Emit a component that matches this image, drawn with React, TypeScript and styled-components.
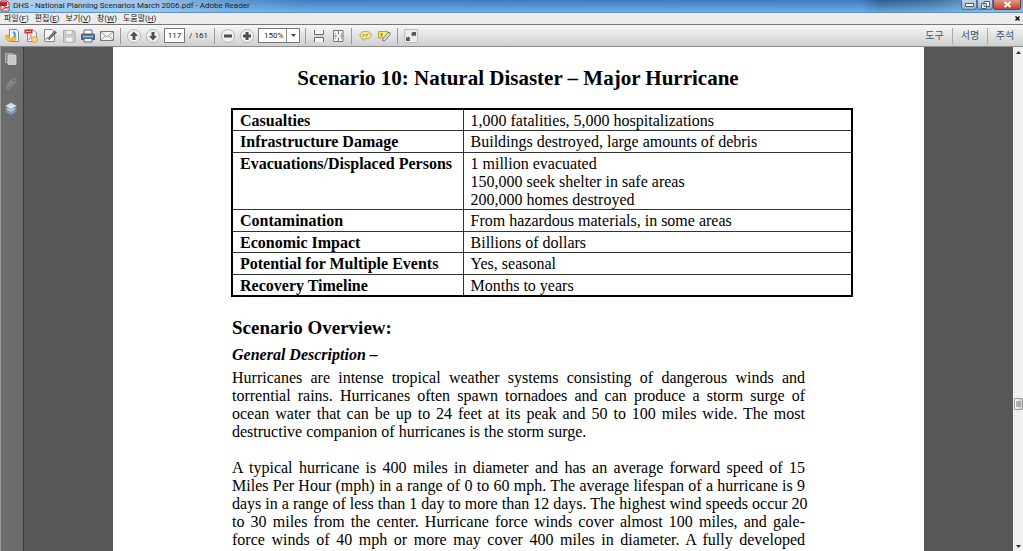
import React from "react";
import styled, { createGlobalStyle } from "styled-components";

const Global = createGlobalStyle`
  * { box-sizing: border-box; }
  body { margin: 0; overflow: hidden; background: #575757; }
  button, input, select { font: inherit; color: inherit; margin: 0; }
  button { border: 0; padding: 0; background: none; }
`;

const Window = styled.div`
  height: 100vh;
  display: flex;
  flex-direction: column;
  font: 8px/12px Roboto, "Noto Sans CJK KR", sans-serif;
  color: #222;
`;

const TitleBar = styled.header`
  flex: none;
  height: 13px;
  display: flex;
  align-items: flex-start;
  gap: 3px;
  background: linear-gradient(rgba(255, 255, 255, 0), rgba(140, 205, 255, 0.6)),
    linear-gradient(90deg, #b4cee8 0, #a3c4e4 14%, #5f97cf 22%, #3f7dbf 30%, #3c7cc0 84%, #2d5c92 86%, #3c6c9e 91%, #7ba5cc 97%);
  border-bottom: 1px solid #5f93c4;
  svg { flex: none; }
`;

const WindowTitle = styled.h1`
  margin: 0;
  flex: 1;
  font-size: 8px;
  line-height: 12px;
  font-weight: 400;
  white-space: nowrap;
`;

const WindowButtons = styled.div`
  display: flex;
  margin-right: 2px;
`;

const WindowButton = styled.button<{ $close?: boolean }>`
  width: ${(p) => (p.$close ? 28 : 16)}px;
  height: 10px;
  display: flex;
  align-items: center;
  justify-content: center;
  border: 1px solid ${(p) => (p.$close ? "#7c3a38" : "#54718f")};
  border-top: 0;
  border-radius: 0 0 3px 3px;
  background: ${(p) => (p.$close ? "linear-gradient(#dc9a8c, #c8402e)" : "linear-gradient(#c3d5e6, #93b2cf)")};
`;

const MenuBar = styled.nav`
  flex: none;
  height: 11px;
  display: flex;
  align-items: center;
  gap: 6px;
  padding: 0 3px 0 4px;
  background: #ececec;
`;

const MenuItem = styled.button`
  line-height: 11px;
  white-space: nowrap;
`;

const DocClose = styled(MenuItem)`
  margin-left: auto;
  display: flex;
`;

const Toolbar = styled.div`
  flex: none;
  height: 23px;
  display: flex;
  align-items: center;
  padding: 0 1px 0 4px;
  background: linear-gradient(#f7f7f7, #cfcfcf);
  border-top: 1px solid #777;
  border-bottom: 1px solid #8c8c8c;
`;

const ToolGroup = styled.div`
  display: flex;
  align-items: center;
  gap: 3px;
`;

const Separator = styled.span`
  width: 1px;
  height: 16px;
  margin: 0 5px;
  background: #999;
`;

const ToolButton = styled.button`
  display: flex;
  width: 16px;
  height: 16px;
`;

const PageField = styled.input`
  width: 21px;
  height: 15px;
  padding: 0;
  border: 1px solid #777;
  background: #fff;
  text-align: center;
`;

const PageTotal = styled.span`
  width: 21px;
  text-align: center;
  white-space: nowrap;
`;

const ZoomBox = styled.div`
  display: flex;
  align-items: center;
  width: 42px;
  height: 15px;
  border: 1px solid #777;
  background: #fff;
`;

const ZoomSelect = styled.select`
  appearance: none;
  flex: 1;
  min-width: 0;
  height: 13px;
  border: 0;
  border-right: 1px solid #888;
  padding: 0 0 0 5px;
  background: none;
`;

const PaneLinks = styled.div`
  display: flex;
  align-items: center;
  margin-left: auto;
`;

const PaneButton = styled.button`
  width: 35px;
  height: 16px;
  font-size: 10px;
  color: #3f5872;
  & + & { border-left: 1px solid #aaa; }
`;

const Workspace = styled.div`
  flex: 1;
  min-height: 0;
  display: flex;
`;

const SideRail = styled.aside`
  flex: none;
  width: 24px;
  display: flex;
  flex-direction: column;
  align-items: center;
  gap: 9px;
  padding: 4px 2px 0 0;
  background: #6c6c6c;
  border-left: 1px solid #999;
  border-right: 1px solid #3c3c3c;
`;

const Canvas = styled.main`
  flex: 1;
  min-width: 0;
  display: flex;
  justify-content: center;
  overflow: hidden;
  background: #575757;
`;

const Sheet = styled.article`
  width: 82%;
  flex: none;
  padding: 0 71px 0 118px;
  background: #fff;
  color: #000;
  font: 16px/18px "Liberation Serif", serif;
`;

const ScenarioTitle = styled.h2`
  margin: 19px 48px 18px 0;
  text-align: center;
  font-size: 21px;
  line-height: 24px;
  white-space: nowrap;
`;

const Facts = styled.table`
  width: 100%;
  border-collapse: collapse;
  border: 2px solid #000;
  th, td {
    padding: 2px 7px 0;
    border: 1px solid #333;
    text-align: left;
    vertical-align: top;
  }
  tr:nth-child(even) > * { padding-bottom: 1px; }
  th { width: 231px; white-space: nowrap; }
`;

const Section = styled.section`
  margin: 0 48px 0 1px;
`;

const SectionTitle = styled.h3`
  margin: 20px 0 6px;
  font-size: 19px;
  line-height: 22px;
`;

const SubTitle = styled.h4`
  margin: 0 0 4px;
  font-size: 16px;
  line-height: 20px;
  font-style: italic;
`;

const Paragraph = styled.p`
  margin: 0 0 18px;
`;

const Line = styled.span<{ $last?: boolean }>`
  display: block;
  white-space: nowrap;
  text-align: justify;
  text-align-last: ${(p) => (p.$last ? "left" : "justify")};
`;

const ScrollTrack = styled.div`
  flex: none;
  width: 10px;
  display: flex;
  flex-direction: column;
  align-items: center;
  background: #f1f1f1;
`;

const ScrollButton = styled.button`
  width: 10px;
  height: 10px;
  display: flex;
  align-items: center;
  justify-content: center;
`;

const ScrollSpace = styled.div<{ $grow: number }>`
  flex: ${(p) => p.$grow} 0 0;
`;

const ScrollThumb = styled.div`
  width: 9px;
  height: 12px;
  display: flex;
  border: 1px solid #999;
  border-radius: 1px;
  background: linear-gradient(90deg, #fafafa, #cfcfcf);
`;

const Arrow = ({ up }: { up?: boolean }) => (
  <svg width="5" height="3" viewBox="0 0 5 3">
    <path d={up ? "M0 3L2.500 0L5 3Z" : "M0 0L2.500 3L5 0Z"} fill="#333" />
  </svg>
);

const icons: Record<string, React.ReactNode> = {
  open: (
    <>
      <path d="M5.500 1.500h7l2 2v10h-9z" fill="#eef5fb" stroke="#6f8ea8" />
      <path d="M9 4c2.500 1 2.500 4 1 6" fill="none" stroke="#5b9cca" strokeWidth="2" />
      <path d="M2 7c-1.500 6 4 7.500 7.500 5.500v1.500l3-3.500-3.500-2.500v1.500c-2.500 1.500-4 .5-4-2z" fill="#f3c04a" stroke="#c2922c" strokeWidth=".6" />
    </>
  ),
  create: (
    <>
      <path d="M4.500 2h6l3 3v8.500h-9z" fill="#fafafa" stroke="#888" />
      <path d="M1.500 1.500h8v4h-8z" fill="#ce3031" />
      <path d="M3 3.500h5" stroke="#f3b9b6" />
      <path d="M5.500 11.500c3-3 3-5 2-5s1 4 3.500 3.500-3-.5-5.500 1.500" fill="none" stroke="#d86a6a" strokeWidth=".8" />
      <circle cx="11.500" cy="11.500" r="3" fill="#f5d968" stroke="#bd9c3c" strokeWidth=".7" />
    </>
  ),
  sign: (
    <>
      <path d="M2.500 1.500h7.500l2.500 2.500v9.500h-10z" fill="#f7f7f7" stroke="#888" />
      <path d="M4 11.500c1.500-4 2.500 1 4-.5" fill="none" stroke="#444" />
      <path d="M7 9l5.500-6L14.500 4.500l-6 6-2 .5z" fill="#777" stroke="#444" strokeWidth=".6" />
    </>
  ),
  save: (
    <>
      <path d="M2.500 2.500h10l1.500 1.500v10h-11.500z" fill="#cfcfcf" stroke="#a8a8a8" />
      <path d="M5 2.500h6v4H5zM4.500 9h7.500v5H4.500z" fill="#f1f1f1" stroke="#b2b2b2" strokeWidth=".7" />
    </>
  ),
  print: (
    <>
      <path d="M4 2h8v5H4z" fill="#fff" stroke="#607181" />
      <path d="M2.500 6h11q1 0 1 1v4.500h-13V7q0-1 1-1z" fill="#5f7a93" stroke="#3f5a72" />
      <path d="M3 8.500h10" stroke="#9cc3e0" />
      <path d="M4 10.500h8v3.500H4z" fill="#e8f4fc" stroke="#607181" />
    </>
  ),
  mail: (
    <>
      <path d="M1.500 3.500h13v9h-13z" fill="#f2f2f2" stroke="#7a7a7a" />
      <path d="M2 4l6 5 6-5M2 12l4-4M14 12l-4-4" fill="none" stroke="#a2a2a2" />
    </>
  ),
  fitWidth: (
    <>
      <path d="M3.500 2v4.500h9V2M3.500 14V9.500h9V14" fill="#f5f5f5" stroke="#6a6a6a" />
      <path d="M3 8h10" stroke="#bbb" strokeDasharray="1 1" />
    </>
  ),
  fitPage: (
    <>
      <path d="M3.500 2.500h9.500v11h-9.500z" fill="#f5f5f5" stroke="#777" />
      <path d="M8.500 3v3.500M8.500 9.500v3.500M4 8h3M10 8h3" fill="none" stroke="#777" />
      <path d="M5.500 5v1.500M11.500 9.500V11M5.500 9.500V11M11.500 5v1.500" stroke="#999" />
    </>
  ),
  comment: (
    <>
      <path d="M8.500 3.500C5 3.500 3 4.700 3 7c0 1.800 1.200 2.700 2.500 3.200L6 12.500l2.500-2c4 0 5.500-1.500 5.500-3.500 0-2.300-2-3.500-5.500-3.500z" fill="#f6f0a0" stroke="#b3a136" />
      <path d="M5.500 6.500h2M5.500 8h2M8.500 6.500h3M8.500 8h2" stroke="#a59a3a" />
    </>
  ),
  highlight: (
    <>
      <path d="M2.500 3.500h9v6.500h-9z" fill="#f5ec72" stroke="#b3a136" />
      <path d="M4.500 5h2v3.500h-2z" fill="#a8992f" />
      <path d="M7 10.500l5-6h2v2l-5 6-2.500.5z" fill="#dedede" stroke="#666" strokeWidth=".8" />
    </>
  ),
  expand: (
    <>
      <path d="M1.500 1.500h13v13h-13z" fill="#ededed" stroke="#bdbdbd" />
      <path d="M8.500 4H13v4.500l-1.500-1.500-1.500 1.500-2-2 1.500-1.500zM3 8.500l1.300 1.200L5.500 8.500l2 2-1.300 1.200L7.500 13H3z" fill="#555" />
    </>
  ),
  pages: (
    <>
      <path d="M2.500 2.500h7v9h-7z" fill="#888" stroke="#b0b0b0" />
      <path d="M5 4h8v9.500H5z" fill="#c9c9c9" stroke="#dedede" strokeWidth=".7" />
    </>
  ),
  clip: <path d="M5 11l5.500-5.500M4 9l5.500-6c1.500-1.500 4.500 0 3 2.500L6.500 12.500c-1.500 1.500-4 0-2.500-2L9.500 5" fill="none" stroke="#9a9a9a" />,
  layers: (
    <>
      <path d="M2 10.500L8 14l6-3.500L8 8z" fill="#7d9bb6" />
      <path d="M2 8l6 3.500L14 8 8 5.500z" fill="#b3c6d8" stroke="#6c7e8e" strokeWidth=".5" />
      <path d="M2 5l6 3.500L14 5 8 1.500z" fill="#d3e0ec" stroke="#6c7e8e" strokeWidth=".5" />
    </>
  ),
};

const Round = ({ d }: { d: string }) => (
  <>
    <circle cx="8" cy="8" r="6.500" fill="#f0f0f0" stroke="#aaa" strokeWidth=".8" />
    <path d={d} fill="#505050" />
  </>
);
icons.up = <Round d="M8 3.500L12 8H9.500v4h-3V8H4z" />;
icons.down = <Round d="M8 12.500L12 8H9.500V4h-3v4H4z" />;
icons.minus = <Round d="M4 6.500h8v3H4z" />;
icons.plus = <Round d="M6.500 4h3v2.500H12v3H9.500V12h-3V9.500H4v-3h2.500z" />;

const Tool = ({ name, label }: { name: string; label: string }) => (
  <ToolButton aria-label={label} title={label}>
    <svg width="16" height="16" viewBox="0 0 16 16">{icons[name]}</svg>
  </ToolButton>
);

const menus = [
  ["파일", "F"],
  ["편집", "E"],
  ["보기", "V"],
  ["창", "W"],
  ["도움말", "H"],
];

const facts: [string, string[]][] = [
  ["Casualties", ["1,000 fatalities, 5,000 hospitalizations"]],
  ["Infrastructure Damage", ["Buildings destroyed, large amounts of debris"]],
  ["Evacuations/Displaced Persons", ["1 million evacuated", "150,000 seek shelter in safe areas", "200,000 homes destroyed"]],
  ["Contamination", ["From hazardous materials, in some areas"]],
  ["Economic Impact", ["Billions of dollars"]],
  ["Potential for Multiple Events", ["Yes, seasonal"]],
  ["Recovery Timeline", ["Months to years"]],
];

const paragraphs = [
  [
    "Hurricanes are intense tropical weather systems consisting of dangerous winds and",
    "torrential rains. Hurricanes often spawn tornadoes and can produce a storm surge of",
    "ocean water that can be up to 24 feet at its peak and 50 to 100 miles wide. The most",
    "destructive companion of hurricanes is the storm surge.",
  ],
  [
    "A typical hurricane is 400 miles in diameter and has an average forward speed of 15",
    "Miles Per Hour (mph) in a range of 0 to 60 mph. The average lifespan of a hurricane is 9",
    "days in a range of less than 1 day to more than 12 days. The highest wind speeds occur 20",
    "to 30 miles from the center. Hurricane force winds cover almost 100 miles, and gale-",
    "force winds of 40 mph or more may cover 400 miles in diameter. A fully developed",
  ],
];

export default function App() {
  return (
    <Window>
      <Global />
      <TitleBar>
        <svg width="10" height="12" viewBox="0 0 10 12">
          <path d="M1 1h6l2 2v8H1z" fill="#fff" stroke="#b33" />
          <path d="M0 2h7v4H0z" fill="#c5232b" />
          <path d="M2 10c3-3 3-5 2-5s2 4 4 3-3-1-6 2" fill="none" stroke="#b22" />
        </svg>
        <WindowTitle>DHS - National Planning Scenarios March 2006.pdf - Adobe Reader</WindowTitle>
        <WindowButtons>
          <WindowButton aria-label="Minimize">
            <svg width="9" height="4"><path d="M.5.5h8v3h-8z" fill="#fff" stroke="#4d6074" /></svg>
          </WindowButton>
          <WindowButton aria-label="Restore">
            <svg width="9" height="8"><path d="M3 .5h5.500v5H3zM.5 2.500h5v5h-5z" fill="#fff" stroke="#4d6074" /></svg>
          </WindowButton>
          <WindowButton $close aria-label="Close">
            <svg width="9" height="7"><path d="M1.500 1l6 5M7.500 1l-6 5" stroke="#fff" strokeWidth="2" /></svg>
          </WindowButton>
        </WindowButtons>
      </TitleBar>
      <MenuBar>
        {menus.map(([text, key]) => (
          <MenuItem key={key}>{text}(<u>{key}</u>)</MenuItem>
        ))}
        <DocClose aria-label="Close document">
          <svg width="5" height="5"><path d="M.5.5l4 4M4.500.5l-4 4" stroke="#111" strokeWidth="1.500" /></svg>
        </DocClose>
      </MenuBar>
      <Toolbar>
        <ToolGroup>
          <Tool name="open" label="Open" />
          <Tool name="create" label="Create PDF" />
          <Tool name="sign" label="Sign" />
          <Tool name="save" label="Save" />
          <Tool name="print" label="Print" />
          <Tool name="mail" label="Mail" />
        </ToolGroup>
        <Separator />
        <ToolGroup>
          <Tool name="up" label="Previous page" />
          <Tool name="down" label="Next page" />
          <PageField aria-label="Page" defaultValue="117" />
          <PageTotal>/ 161</PageTotal>
        </ToolGroup>
        <Separator />
        <ToolGroup>
          <Tool name="minus" label="Zoom out" />
          <Tool name="plus" label="Zoom in" />
          <ZoomBox>
            <ZoomSelect aria-label="Zoom" defaultValue="150%">
              <option>150%</option>
            </ZoomSelect>
            <svg width="12" height="3" viewBox="0 0 12 3"><path d="M4 0h5L6.500 3z" fill="#444" /></svg>
          </ZoomBox>
        </ToolGroup>
        <Separator />
        <ToolGroup>
          <Tool name="fitWidth" label="Fit width" />
          <Tool name="fitPage" label="Fit page" />
        </ToolGroup>
        <Separator />
        <ToolGroup>
          <Tool name="comment" label="Comment" />
          <Tool name="highlight" label="Highlight" />
        </ToolGroup>
        <Separator />
        <Tool name="expand" label="Read mode" />
        <PaneLinks>
          <PaneButton>도구</PaneButton>
          <PaneButton>서명</PaneButton>
          <PaneButton>주석</PaneButton>
        </PaneLinks>
      </Toolbar>
      <Workspace>
        <SideRail>
          <Tool name="pages" label="Pages" />
          <Tool name="clip" label="Attachments" />
          <Tool name="layers" label="Layers" />
        </SideRail>
        <Canvas>
          <Sheet>
            <ScenarioTitle>Scenario 10: Natural Disaster – Major Hurricane</ScenarioTitle>
            <Facts>
              <tbody>
                {facts.map(([label, lines]) => (
                  <tr key={label}>
                    <th scope="row">{label}</th>
                    <td>{lines.map((l) => <div key={l}>{l}</div>)}</td>
                  </tr>
                ))}
              </tbody>
            </Facts>
            <Section>
              <SectionTitle>Scenario Overview:</SectionTitle>
              <SubTitle>General Description –</SubTitle>
              {paragraphs.map((lines, i) => (
                <Paragraph key={i}>
                  {lines.map((l, j) => <Line key={l} $last={i === 0 && j === lines.length - 1}>{l} </Line>)}
                </Paragraph>
              ))}
            </Section>
          </Sheet>
        </Canvas>
        <ScrollTrack>
          <ScrollButton aria-label="Scroll up"><Arrow up /></ScrollButton>
          <ScrollSpace $grow={342} />
          <ScrollThumb>
            <svg width="7" height="10"><path d="M1 3h5M1 5h5M1 7h5" stroke="#777" /></svg>
          </ScrollThumb>
          <ScrollSpace $grow={132} />
          <ScrollButton aria-label="Scroll down"><Arrow /></ScrollButton>
        </ScrollTrack>
      </Workspace>
    </Window>
  );
}
